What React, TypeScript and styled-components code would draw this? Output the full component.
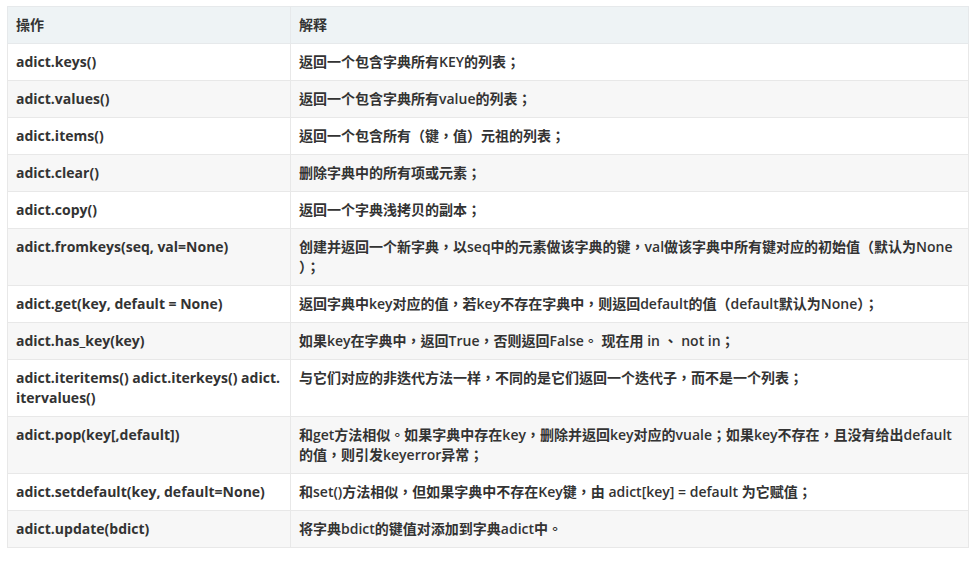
import styled, { createGlobalStyle } from "styled-components";

const GlobalStyle = createGlobalStyle`
  html, body {
    margin: 0;
    padding: 0;
    background: #ffffff;
  }
`;

const Page = styled.div`
  padding: 6px 2px 0 7px;
  font-family: "Open Sans", "Noto Sans CJK TC", sans-serif;
`;

const Table = styled.table`
  width: 962px;
  border-collapse: collapse;
  table-layout: fixed;
  font-size: 14px;
  line-height: 20px;
  color: #333333;
`;

const HeadRow = styled.tr`
  background: #eef3f5;
`;

const Row = styled.tr<{ $striped: boolean }>`
  background: ${(props) => (props.$striped ? "#f7f7f7" : "#ffffff")};
`;

const Th = styled.th`
  text-align: left;
  font-weight: 600;
  padding: 8px 8px;
  border: 1px solid #e6e9eb;
`;

const Td = styled.td<{ $code?: boolean }>`
  vertical-align: top;
  font-weight: ${(props) => (props.$code ? 700 : 600)};
  padding: 8px 8px;
  border: 1px solid #e8e8e8;
  word-wrap: break-word;
`;

const rows: { op: React.ReactNode; desc: React.ReactNode }[] = [
  { op: "adict.keys()", desc: "返回一个包含字典所有KEY的列表；" },
  { op: "adict.values()", desc: "返回一个包含字典所有value的列表；" },
  { op: "adict.items()", desc: "返回一个包含所有（键，值）元祖的列表；" },
  { op: "adict.clear()", desc: "删除字典中的所有项或元素；" },
  { op: "adict.copy()", desc: "返回一个字典浅拷贝的副本；" },
  {
    op: "adict.fromkeys(seq, val=None)",
    desc: (
      <>
        创建并返回一个新字典，以seq中的元素做该字典的键，val做该字典中所有键对应的初始值（默认为None
        <br />
        ）；
      </>
    ),
  },
  {
    op: "adict.get(key, default = None)",
    desc: "返回字典中key对应的值，若key不存在字典中，则返回default的值（default默认为None）；",
  },
  {
    op: "adict.has_key(key)",
    desc: "如果key在字典中，返回True，否则返回False。 现在用 in 、 not in；",
  },
  {
    op: (
      <>
        adict.iteritems() adict.iterkeys() adict.
        <br />
        itervalues()
      </>
    ),
    desc: "与它们对应的非迭代方法一样，不同的是它们返回一个迭代子，而不是一个列表；",
  },
  {
    op: "adict.pop(key[,default])",
    desc: (
      <>
        和get方法相似。如果字典中存在key，删除并返回key对应的vuale；如果key不存在，且没有给出default
        <br />
        的值，则引发keyerror异常；
      </>
    ),
  },
  {
    op: "adict.setdefault(key, default=None)",
    desc: "和set()方法相似，但如果字典中不存在Key键，由 adict[key] = default 为它赋值；",
  },
  { op: "adict.update(bdict)", desc: "将字典bdict的键值对添加到字典adict中。" },
];

function App() {
  return (
    <Page>
      <GlobalStyle />
      <Table>
        <colgroup>
          <col style={{ width: 283 }} />
          <col />
        </colgroup>
        <thead>
          <HeadRow>
            <Th>操作</Th>
            <Th>解释</Th>
          </HeadRow>
        </thead>
        <tbody>
          {rows.map((row, i) => (
            <Row key={i} $striped={i % 2 === 1}>
              <Td $code>{row.op}</Td>
              <Td>{row.desc}</Td>
            </Row>
          ))}
        </tbody>
      </Table>
    </Page>
  );
}

export default App;
